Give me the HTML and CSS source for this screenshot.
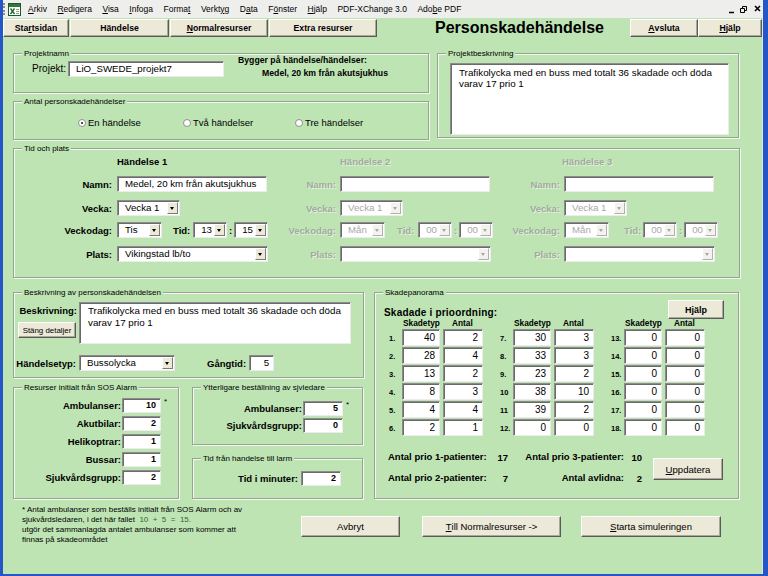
FILE: index.html
```html
<!DOCTYPE html>
<html lang="sv">
<head>
<meta charset="utf-8">
<title>Personskadehändelse</title>
<link rel="stylesheet" href="styles.css">
</head>
<body>
<div class="window">
  <div class="menubar">
    <span class="grip"></span>
    <span class="appicon"><svg width="13" height="13" viewBox="0 0 13 13"><rect x="0.5" y="0.5" width="12" height="12" fill="#fff" stroke="#1d5a2a"/><rect x="1" y="1" width="11" height="3" fill="#2f7a3a"/><path d="M2.5 5.5 L6.5 11 M6.5 5.5 L2.5 11" stroke="#1d6a2a" stroke-width="1.4"/><path d="M8 6.5h3M8 8.5h3M8 10.5h3" stroke="#6a8a6a" stroke-width="0.8"/></svg></span>
    <span class="mi"><u>A</u>rkiv</span>
    <span class="mi"><u>R</u>edigera</span>
    <span class="mi"><u>V</u>isa</span>
    <span class="mi"><u>I</u>nfoga</span>
    <span class="mi">Forma<u>t</u></span>
    <span class="mi">Verkt<u>y</u>g</span>
    <span class="mi">D<u>a</u>ta</span>
    <span class="mi">F<u>ö</u>nster</span>
    <span class="mi"><u>H</u>jälp</span>
    <span class="mi">PDF-XChange 3.0</span>
    <span class="mi">Ado<u>b</u>e PDF</span>
    <span class="winctl"><svg width="34" height="10" viewBox="0 0 34 10"><path d="M1 8.5h5" stroke="#000" stroke-width="1.5"/><path d="M12.5 4.5h4v4h-4z M14.5 4.5v-2h4v4h-2" fill="none" stroke="#000" stroke-width="1"/><path d="M27 2l5 5M32 2l-5 5" stroke="#000" stroke-width="1.6"/></svg></span>
  </div>

  <div class="client">
    <div class="toprow">
      <div class="btn nav nav1">Sta<u>r</u>tsidan</div>
      <div class="btn nav nav2">Händelse</div>
      <div class="btn nav nav3"><u>N</u>ormalresurser</div>
      <div class="btn nav nav4">Extra resurser</div>
      <div class="title">Personskadehändelse</div>
      <div class="btn nav nav5"><u>A</u>vsluta</div>
      <div class="btn nav nav6"><u>H</u>jälp</div>
    </div>

    <div class="row1">
      <div class="col1">
        <div class="grp g-projnamn">
          <span class="legend">Projektnamn</span>
          <span class="pn-label">Projekt:</span>
          <div class="fld pn-input">LiO_SWEDE_projekt7</div>
          <div class="pn-info">
            <div>Bygger på händelse/händelser:</div>
            <div class="l2">Medel, 20 km från akutsjukhus</div>
          </div>
        </div>
        <div class="grp g-antal">
          <span class="legend">Antal personskadehändelser</span>
          <div class="radios">
            <span class="radio r1"><span class="rb on"></span>En händelse</span>
            <span class="radio r2"><span class="rb"></span>Två händelser</span>
            <span class="radio r3"><span class="rb"></span>Tre händelser</span>
          </div>
        </div>
      </div>
      <div class="grp g-projbesk">
        <span class="legend">Projektbeskrivning</span>
        <div class="fld pb-ta">Trafikolycka med en buss med totalt 36 skadade och döda varav 17 prio 1</div>
      </div>
    </div>

    <div class="grp g-tid">
      <span class="legend">Tid och plats</span>
      <div class="evcol c1">
        <div class="evhead">Händelse 1</div>
        <div class="evrow r-namn"><span class="lbl">Namn:</span><div class="fld w-namn"><span class="v">Medel, 20 km från akutsjukhus</span></div></div>
        <div class="evrow r-vecka"><span class="lbl">Vecka:</span><div class="sel w-vecka"><span class="v">Vecka 1</span><span class="dd"></span></div></div>
        <div class="evrow r-dag"><span class="lbl">Veckodag:</span><div class="sel w-dag"><span class="v">Tis</span><span class="dd"></span></div><span class="tl">Tid:</span><div class="sel num w-time"><span class="v">13</span><span class="dd"></span></div><span class="colon">:</span><div class="sel num w-time"><span class="v">15</span><span class="dd"></span></div></div>
        <div class="evrow r-plats"><span class="lbl">Plats:</span><div class="sel w-plats"><span class="v">Vikingstad lb/to</span><span class="dd"></span></div></div>
      </div>
      <div class="evcol c2 dis">
        <div class="evhead">Händelse 2</div>
        <div class="evrow r-namn"><span class="lbl">Namn:</span><div class="fld w-namn"><span class="v"></span></div></div>
        <div class="evrow r-vecka"><span class="lbl">Vecka:</span><div class="sel w-vecka"><span class="v">Vecka 1</span><span class="dd"></span></div></div>
        <div class="evrow r-dag"><span class="lbl">Veckodag:</span><div class="sel w-dag"><span class="v">Mån</span><span class="dd"></span></div><span class="tl">Tid:</span><div class="sel num w-time"><span class="v">00</span><span class="dd"></span></div><span class="colon">:</span><div class="sel num w-time"><span class="v">00</span><span class="dd"></span></div></div>
        <div class="evrow r-plats"><span class="lbl">Plats:</span><div class="sel w-plats"><span class="v"></span><span class="dd"></span></div></div>
      </div>
      <div class="evcol c3 dis">
        <div class="evhead">Händelse 3</div>
        <div class="evrow r-namn"><span class="lbl">Namn:</span><div class="fld w-namn"><span class="v"></span></div></div>
        <div class="evrow r-vecka"><span class="lbl">Vecka:</span><div class="sel w-vecka"><span class="v">Vecka 1</span><span class="dd"></span></div></div>
        <div class="evrow r-dag"><span class="lbl">Veckodag:</span><div class="sel w-dag"><span class="v">Mån</span><span class="dd"></span></div><span class="tl">Tid:</span><div class="sel num w-time"><span class="v">00</span><span class="dd"></span></div><span class="colon">:</span><div class="sel num w-time"><span class="v">00</span><span class="dd"></span></div></div>
        <div class="evrow r-plats"><span class="lbl">Plats:</span><div class="sel w-plats"><span class="v"></span><span class="dd"></span></div></div>
      </div>
    </div>

    <div class="row3">
      <div class="col3">
        <div class="grp g-besk">
          <span class="legend">Beskrivning av personskadehändelsen</span>
          <div class="bk-top">
            <div class="bk-left">
              <span class="bk-lbl">Beskrivning:</span>
              <div class="btn stang">Stäng detaljer</div>
            </div>
            <div class="fld bk-ta">Trafikolycka med en buss med totalt 36 skadade och döda varav 17 prio 1</div>
          </div>
          <div class="bk-bot">
            <span class="ht-lbl">Händelsetyp:</span>
            <div class="sel w-ht"><span class="v">Bussolycka</span><span class="dd"></span></div>
            <span class="gt-lbl">Gångtid:</span>
            <div class="fld gt-in">5</div>
          </div>
        </div>
        <div class="resrow">
          <div class="grp g-res">
            <span class="legend">Resurser initialt från SOS Alarm</span>
            <div class="frow"><span class="flbl">Ambulanser:</span><div class="fld nin">10</div><span class="ast">*</span></div>
            <div class="frow"><span class="flbl">Akutbilar:</span><div class="fld nin">2</div></div>
            <div class="frow"><span class="flbl">Helikoptrar:</span><div class="fld nin">1</div></div>
            <div class="frow"><span class="flbl">Bussar:</span><div class="fld nin">1</div></div>
            <div class="frow"><span class="flbl">Sjukvårdsgrupp:</span><div class="fld nin">2</div></div>
          </div>
          <div class="rescol">
            <div class="grp g-ytt">
              <span class="legend">Ytterligare beställning av sjvledare</span>
              <div class="frow"><span class="flbl">Ambulanser:</span><div class="fld nin">5</div><span class="ast">*</span></div>
              <div class="frow"><span class="flbl">Sjukvårdsgrupp:</span><div class="fld nin">0</div></div>
            </div>
            <div class="grp g-tl">
              <span class="legend">Tid från handelse till larm</span>
              <div class="frow"><span class="flbl">Tid i minuter:</span><div class="fld nin">2</div></div>
            </div>
          </div>
        </div>
      </div>

      <div class="grp g-skada">
        <span class="legend">Skadepanorama</span>
        <div class="sk-top">
          <span class="sk-title">Skadade i prioordning:</span>
          <div class="btn hjalp2">Hjälp</div>
        </div>
        <div class="sk-grid">
          <div class="sk-grp">
            <div class="sk-head"><span class="h1">Skadetyp</span><span class="h2">Antal</span></div>
            <div class="sk-row"><span class="sk-num">1.</span><div class="fld sk-in st">40</div><div class="fld sk-in an">2</div></div>
            <div class="sk-row"><span class="sk-num">2.</span><div class="fld sk-in st">28</div><div class="fld sk-in an">4</div></div>
            <div class="sk-row"><span class="sk-num">3.</span><div class="fld sk-in st">13</div><div class="fld sk-in an">2</div></div>
            <div class="sk-row"><span class="sk-num">4.</span><div class="fld sk-in st">8</div><div class="fld sk-in an">3</div></div>
            <div class="sk-row"><span class="sk-num">5.</span><div class="fld sk-in st">4</div><div class="fld sk-in an">4</div></div>
            <div class="sk-row"><span class="sk-num">6.</span><div class="fld sk-in st">2</div><div class="fld sk-in an">1</div></div>
          </div>
          <div class="sk-grp">
            <div class="sk-head"><span class="h1">Skadetyp</span><span class="h2">Antal</span></div>
            <div class="sk-row"><span class="sk-num">7.</span><div class="fld sk-in st">30</div><div class="fld sk-in an">3</div></div>
            <div class="sk-row"><span class="sk-num">8.</span><div class="fld sk-in st">33</div><div class="fld sk-in an">3</div></div>
            <div class="sk-row"><span class="sk-num">9.</span><div class="fld sk-in st">23</div><div class="fld sk-in an">2</div></div>
            <div class="sk-row"><span class="sk-num">10</span><div class="fld sk-in st">38</div><div class="fld sk-in an">10</div></div>
            <div class="sk-row"><span class="sk-num">11</span><div class="fld sk-in st">39</div><div class="fld sk-in an">2</div></div>
            <div class="sk-row"><span class="sk-num">12.</span><div class="fld sk-in st">0</div><div class="fld sk-in an">0</div></div>
          </div>
          <div class="sk-grp">
            <div class="sk-head"><span class="h1">Skadetyp</span><span class="h2">Antal</span></div>
            <div class="sk-row"><span class="sk-num">13.</span><div class="fld sk-in st">0</div><div class="fld sk-in an">0</div></div>
            <div class="sk-row"><span class="sk-num">14.</span><div class="fld sk-in st">0</div><div class="fld sk-in an">0</div></div>
            <div class="sk-row"><span class="sk-num">15.</span><div class="fld sk-in st">0</div><div class="fld sk-in an">0</div></div>
            <div class="sk-row"><span class="sk-num">16.</span><div class="fld sk-in st">0</div><div class="fld sk-in an">0</div></div>
            <div class="sk-row"><span class="sk-num">17.</span><div class="fld sk-in st">0</div><div class="fld sk-in an">0</div></div>
            <div class="sk-row"><span class="sk-num">18.</span><div class="fld sk-in st">0</div><div class="fld sk-in an">0</div></div>
          </div>
        </div>
        <div class="sk-bot">
          <div class="stats">
            <span>Antal prio 1-patienter:</span><span class="v">17</span><span class="r">Antal prio 3-patienter:</span><span class="v">10</span>
            <span>Antal prio 2-patienter:</span><span class="v">7</span><span class="r">Antal avlidna:</span><span class="v">2</span>
          </div>
          <div class="btn upd"><u>U</u>ppdatera</div>
        </div>
      </div>
    </div>

    <div class="bottom">
      <div class="foot">
        <div>* Antal ambulanser som beställs initialt från SOS Alarm och av</div>
        <div>sjukvårdsledaren, i det här fallet&nbsp; <span class="calc">10 &nbsp;+ &nbsp;5 &nbsp;= &nbsp;15.</span></div>
        <div>utgör det sammanlagda antalet ambulanser som kommer att</div>
        <div>finnas på skadeområdet</div>
      </div>
      <div class="btns">
        <div class="btn bb b-avb">Avbryt</div>
        <div class="btn bb b-till"><u>T</u>ill Normalresurser -&gt;</div>
        <div class="btn bb b-start"><u>S</u>tarta simuleringen</div>
      </div>
    </div>
  </div>
</div>
</body>
</html>
```

FILE: styles.css
```css
* { box-sizing: border-box; }
html, body { margin: 0; padding: 0; }
body {
  width: 768px; height: 576px; overflow: hidden;
  background: #2456c8;
  font-family: "Liberation Sans", Arial, sans-serif;
  color: #000;
}
u { text-decoration: underline; text-underline-offset: 1px; }

.window {
  width: 768px; height: 576px;
  display: flex; flex-direction: column;
  border-left: 3px solid #2456c8;
  border-right: 5px solid #2456c8;
  border-bottom: 2px solid #2456c8;
}

/* menu bar */
.menubar {
  height: 18px; flex: none;
  display: flex; align-items: center;
  background: #eeeeec;
  font-size: 8.5px; line-height: 10px;
}
.grip { width: 2px; height: 12px; border-left: 2px dotted #8c8c8c; }
.appicon { display: flex; margin-left: 3px; margin-right: 7px; }
.mi { margin-right: 10.5px; white-space: nowrap; }
.winctl { margin-left: auto; display: flex; margin-right: 1px; }

/* client area */
.client {
  flex: 1;
  background: #bee4b4;
  display: flex; flex-direction: column;
  border-right: 1px solid #dcedd7;
}

/* buttons */
.btn {
  background: #ece9d8;
  border: 1px solid;
  border-color: #ffffff #5a5a5a #5a5a5a #ffffff;
  box-shadow: inset -1px -1px 0 #aca899;
  display: flex; align-items: center; justify-content: center;
  white-space: nowrap;
  flex: none;
}

.toprow { display: flex; height: 18px; margin-top: 1px; flex: none; }
.nav { font-size: 8.7px; font-weight: bold; height: 18px; }
.nav1 { width: 66px; }
.nav2 { width: 99px; margin-left: 1px; }
.nav3 { width: 98px; margin-left: 1px; }
.nav4 { width: 108px; margin-left: 1px; }
.nav5 { width: 68px; }
.nav6 { width: 64px; }
.title {
  flex: 1; text-align: center; padding-left: 32px;
  font-size: 16px; font-weight: bold; line-height: 18px;
}

/* group boxes */
.grp {
  position: relative;
  border: 1px solid #98a394;
  box-shadow: inset 1px 1px 0 #f2faf0, 1px 1px 0 #f2faf0;
  flex: none;
}
.legend {
  position: absolute; top: -6px; left: 8px;
  padding: 0 2px;
  background: #bee4b4;
  font-size: 8px; line-height: 11px;
  white-space: nowrap;
}

/* fields */
.fld, .sel {
  background: #fff;
  border: 1px solid;
  border-color: #8c8c8c #ececec #ececec #8c8c8c;
  box-shadow: inset 1px 1px 0 #6a6a6a;
  flex: none;
}

/* row 1 */
.row1 { display: flex; margin-top: 16px; padding-left: 10px; flex: none; }
.col1 { width: 416px; display: flex; flex-direction: column; }
.g-projnamn { height: 40px; padding-top: 7px; display: flex; align-items: flex-start; }
.pn-label { width: 52px; text-align: right; font-size: 10px; line-height: 16px; flex: none; }
.pn-input {
  width: 156px; height: 16px; margin-left: 2px;
  padding-left: 7px; font-size: 9.7px; line-height: 14px;
}
.pn-info { margin-left: 14px; margin-top: -6px; font-weight: bold; font-size: 8.7px; line-height: 11px; white-space: nowrap; }
.pn-info .l2 { padding-left: 24px; margin-top: 2px; }

.g-antal { height: 39px; margin-top: 8px; }
.radios { display: flex; padding: 15px 0 0 64px; font-size: 9.5px; line-height: 12px; }
.radio { display: flex; align-items: center; white-space: nowrap; }
.r1 { width: 105px; }
.r2 { width: 112px; }
.rb {
  width: 8px; height: 8px; border-radius: 50%;
  background: #fff; border: 1px solid #8e8e8e;
  margin-right: 2px; position: relative; flex: none;
}
.rb.on::after {
  content: ""; position: absolute; left: 2px; top: 2px;
  width: 2px; height: 2px; border-radius: 50%; background: #111;
}

.g-projbesk { width: 302px; height: 85px; margin-left: 8px; padding: 9px 0 0 12px; }
.pb-ta { width: 279px; height: 72px; padding: 3px 6px 0 8px; font-size: 9.8px; line-height: 11px; }

/* tid och plats */
.g-tid { margin: 8px 0 0 10px; width: 727px; height: 130px; padding-top: 7px; display: flex; }
.evcol { display: flex; flex-direction: column; flex: none; }
.c1 { width: 256px; }
.c2 { width: 224px; }
.c3 { width: 244px; }
.evhead { font-weight: bold; font-size: 9.5px; line-height: 12px; height: 12px; white-space: nowrap; }
.c1 .evhead { padding-left: 103px; }
.c2 .evhead { padding-left: 70px; }
.c3 .evhead { padding-left: 68px; }
.evrow { display: flex; align-items: center; height: 16px; }
.r-namn, .r-vecka, .r-plats { margin-top: 8px; }
.r-dag { margin-top: 6px; }
.lbl { font-weight: bold; font-size: 9.5px; text-align: right; flex: none; white-space: nowrap; }
.c1 .lbl { width: 98px; margin-right: 5px; }
.c2 .lbl, .c3 .lbl { width: 66px; margin-right: 4px; }

.evrow .fld, .sel { height: 16px; display: flex; align-items: center; font-size: 9.7px; }
.v { flex: 1; padding-left: 7px; white-space: nowrap; overflow: hidden; line-height: 14px; }
.sel.num .v { text-align: right; padding: 0 2px 0 0; }
.dd {
  width: 11px; height: 12px; margin-right: 1px;
  background: #ece9d8;
  border: 1px solid; border-color: #fff #7a7a7a #7a7a7a #fff;
  position: relative; flex: none;
}
.dd::after {
  content: ""; position: absolute; left: 2px; top: 4px;
  border-left: 2.5px solid transparent; border-right: 2.5px solid transparent;
  border-top: 3px solid #000;
}
.w-namn { width: 150px; }
.w-vecka { width: 63px; }
.w-dag { width: 45px; }
.w-time { width: 34px; }
.w-plats { width: 151px; }
.tl { font-weight: bold; font-size: 9.5px; width: 20px; margin-left: 11px; flex: none; }
.c2 .tl { margin-left: 12px; width: 21px; }
.c3 .tl { margin-left: 15px; width: 19px; }
.colon { width: 7px; text-align: center; font-weight: bold; font-size: 9.5px; flex: none; }

.dis .lbl, .dis .evhead, .dis .tl, .dis .colon {
  color: #a3aa9f; text-shadow: 1px 1px 0 rgba(255,255,255,0.55);
}
.dis .v { color: #a8a8a8; }
.dis .dd { background: #f3f2ec; border-color: #fff #b0b0b0 #b0b0b0 #fff; }
.dis .dd::after { border-top-color: #a8a8a8; }

/* row 3 */
.row3 { display: flex; margin: 14px 0 0 10px; flex: none; }
.col3 { width: 351px; display: flex; flex-direction: column; flex: none; }
.g-besk { height: 86px; padding-top: 9px; }
.bk-top { display: flex; }
.bk-left { width: 64px; display: flex; flex-direction: column; flex: none; }
.bk-lbl { font-weight: bold; font-size: 9.5px; line-height: 12px; text-align: right; padding-right: 1px; margin-top: 3px; }
.stang { width: 58px; height: 16px; margin: 5px 0 0 4px; font-size: 7.9px; }
.bk-ta { width: 272px; height: 42px; margin-left: 1px; padding: 2px 4px 0 8px; font-size: 9.8px; line-height: 12px; }
.bk-bot { display: flex; align-items: center; margin-top: 11px; height: 16px; }
.ht-lbl { width: 64px; text-align: right; padding-right: 2px; font-weight: bold; font-size: 9.5px; flex: none; }
.w-ht { width: 96px; margin-left: 1px; }
.gt-lbl { margin-left: 32px; font-weight: bold; font-size: 9.5px; white-space: nowrap; }
.gt-in { width: 25px; height: 16px; margin-left: 3px; text-align: right; padding-right: 4px; font-size: 9.7px; line-height: 14px; }

.resrow { display: flex; margin-top: 9px; }
.g-res { width: 166px; height: 112px; padding-top: 10px; }
.rescol { width: 171px; margin-left: 13px; display: flex; flex-direction: column; flex: none; }
.g-ytt { height: 58px; padding-top: 13px; }
.g-tl { height: 41px; margin-top: 13px; padding-top: 12px; }
.frow { display: flex; align-items: center; height: 15px; }
.g-res .frow + .frow { margin-top: 3px; }
.g-ytt .frow + .frow { margin-top: 2px; }
.flbl { text-align: right; font-weight: bold; font-size: 9.5px; margin-right: 1px; flex: none; white-space: nowrap; }
.g-res .flbl { width: 107px; }
.g-ytt .flbl { width: 109px; }
.g-tl .flbl { width: 105px; margin-right: 3px; }
.nin { width: 39px; height: 15px; text-align: right; padding-right: 4px; font-weight: bold; font-size: 9px; line-height: 13px; }
.g-ytt .nin, .g-tl .nin { width: 40px; }
.ast { font-size: 8px; align-self: flex-start; margin-left: 3px; line-height: 8px; }

/* skadepanorama */
.g-skada { width: 365px; height: 207px; margin-left: 10px; padding: 7px 14px 0 9px; }
.sk-top { display: flex; justify-content: space-between; align-items: flex-start; height: 19px; }
.sk-title { font-weight: bold; font-size: 10px; line-height: 13px; margin-top: 6px; letter-spacing: 0.2px; }
.hjalp2 { width: 56px; height: 19px; font-size: 9px; font-weight: bold; }
.sk-grid { display: flex; padding-left: 5px; }
.sk-grp { width: 111px; flex: none; }
.sk-head { display: flex; height: 9px; font-size: 8.3px; font-weight: bold; line-height: 9px; padding-left: 13px; white-space: nowrap; }
.sk-head .h1 { width: 41px; padding-left: 1px; }
.sk-head .h2 { padding-left: 9px; }
.sk-row { display: flex; align-items: center; height: 17px; margin-top: 1px; }
.sk-num { width: 13px; font-size: 7.5px; font-weight: bold; flex: none; padding-top: 2px; }
.sk-in { height: 17px; text-align: right; padding-right: 4px; font-size: 10px; line-height: 15px; }
.st { width: 38px; }
.an { width: 40px; margin-left: 3px; }

.sk-bot { display: flex; align-items: flex-start; margin-top: 15px; padding-left: 4px; }
.stats {
  display: grid; grid-template-columns: 102px 18px 116px 18px;
  row-gap: 7px; font-weight: bold; font-size: 9.5px; line-height: 12px; white-space: nowrap;
}
.stats .v, .stats .r { text-align: right; }
.upd { width: 70px; height: 22px; margin: 7px 0 0 11px; font-size: 9.6px; }

/* bottom */
.bottom { display: flex; margin-top: 6px; padding-left: 19px; flex: none; }
.foot { width: 279px; font-size: 8px; line-height: 10px; white-space: nowrap; flex: none; }
.calc { color: #3b5e33; }
.btns { display: flex; margin-top: 11px; }
.bb { height: 21px; font-size: 9.5px; }
.b-avb { width: 99px; }
.b-till { width: 139px; margin-left: 22px; }
.b-start { width: 140px; margin-left: 20px; }
```
